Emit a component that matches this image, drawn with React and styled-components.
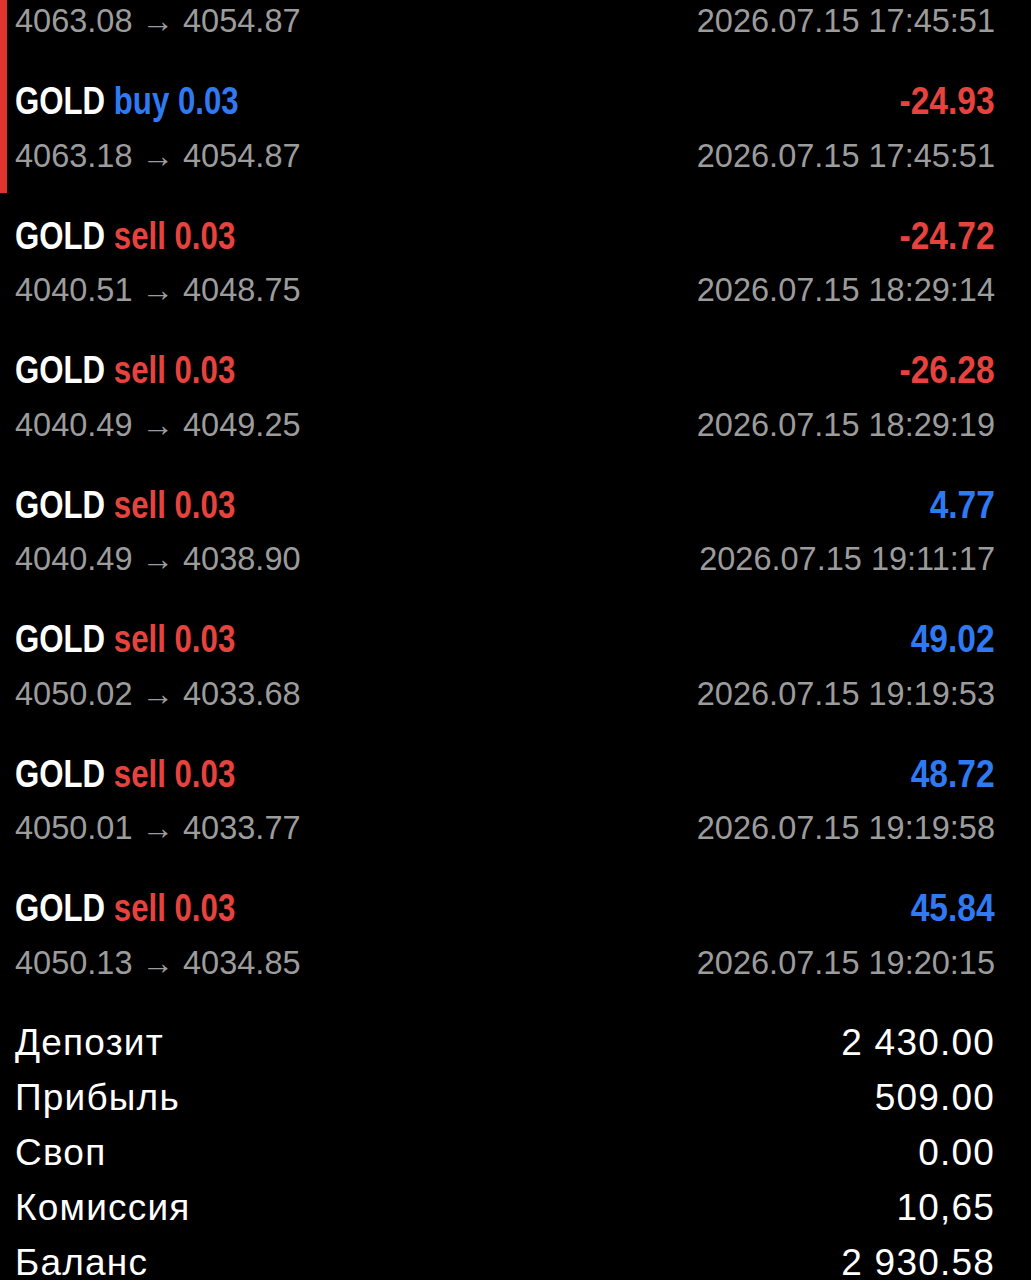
import React from 'react';
import styled, { createGlobalStyle } from 'styled-components';

const GlobalStyle = createGlobalStyle`
  html, body {
    margin: 0;
    padding: 0;
    background: #000;
  }
  body {
    font-family: "Liberation Sans", Arial, sans-serif;
    -webkit-font-smoothing: antialiased;
  }
`;

const RED = '#e6433f';
const BLUE = '#2f7af2';

const Screen = styled.div`
  width: 1031px;
  height: 1280px;
  overflow: hidden;
  background: #000;
  position: relative;
`;

// the list is scrolled: first row is cut off above the top edge
const List = styled.div`
  position: relative;
  margin-top: -61px;
`;

const SideMark = styled.div`
  position: absolute;
  left: 0;
  top: 61px;
  width: 7px;
  height: 193px;
  background: #e0342f;
`;

const Row = styled.div`
  display: flex;
  flex-direction: column;
  padding: 0 36px 24.5px 15px;
  height: 134.5px;
  box-sizing: border-box;
`;

const Line = styled.div`
  display: flex;
  justify-content: space-between;
  align-items: center;
  height: 55px;
`;

// no condensed face installed, so the bold headline is squeezed horizontally
const Condensed = styled.div`
  display: inline-block;
  font-weight: 700;
  font-size: 39px;
  white-space: nowrap;
`;

const Title = styled(Condensed)`
  color: #fff;
  transform: scaleX(0.8);
  transform-origin: left center;
`;

const Side = styled.span`
  color: ${(p) => (p.$type === 'buy' ? BLUE : RED)};
`;

const Profit = styled(Condensed)`
  color: ${(p) => (p.$neg ? RED : BLUE)};
  transform: scaleX(0.86);
  transform-origin: right center;
`;

const Sub = styled.div`
  font-size: 32.5px;
  color: #9c9c9c;
  white-space: nowrap;
`;

const Summary = styled.div`
  padding: 0 36px 0 15px;
`;

const SumLine = styled.div`
  display: flex;
  justify-content: space-between;
  align-items: center;
  height: 55px;
  font-size: 37px;
  letter-spacing: 1.2px;
  color: #fff;
`;

const trades = [
  { type: 'buy', open: '4063.08', close: '4054.87', profit: '-24.93', time: '2026.07.15 17:45:51' },
  { type: 'buy', open: '4063.18', close: '4054.87', profit: '-24.93', time: '2026.07.15 17:45:51' },
  { type: 'sell', open: '4040.51', close: '4048.75', profit: '-24.72', time: '2026.07.15 18:29:14' },
  { type: 'sell', open: '4040.49', close: '4049.25', profit: '-26.28', time: '2026.07.15 18:29:19' },
  { type: 'sell', open: '4040.49', close: '4038.90', profit: '4.77', time: '2026.07.15 19:11:17' },
  { type: 'sell', open: '4050.02', close: '4033.68', profit: '49.02', time: '2026.07.15 19:19:53' },
  { type: 'sell', open: '4050.01', close: '4033.77', profit: '48.72', time: '2026.07.15 19:19:58' },
  { type: 'sell', open: '4050.13', close: '4034.85', profit: '45.84', time: '2026.07.15 19:20:15' },
];

const totals = [
  ['Депозит', '2 430.00'],
  ['Прибыль', '509.00'],
  ['Своп', '0.00'],
  ['Комиссия', '10,65'],
  ['Баланс', '2 930.58'],
];

export default function App() {
  return (
    <Screen>
      <GlobalStyle />
      <List>
        <SideMark />
        {trades.map((t, i) => (
          <Row key={i}>
            <Line>
              <Title>
                GOLD <Side $type={t.type}>{t.type} 0.03</Side>
              </Title>
              <Profit $neg={t.profit.startsWith('-')}>{t.profit}</Profit>
            </Line>
            <Line>
              <Sub>
                {t.open} → {t.close}
              </Sub>
              <Sub>{t.time}</Sub>
            </Line>
          </Row>
        ))}
        <Summary>
          {totals.map(([label, value]) => (
            <SumLine key={label}>
              <span>{label}</span>
              <span>{value}</span>
            </SumLine>
          ))}
        </Summary>
      </List>
    </Screen>
  );
}
